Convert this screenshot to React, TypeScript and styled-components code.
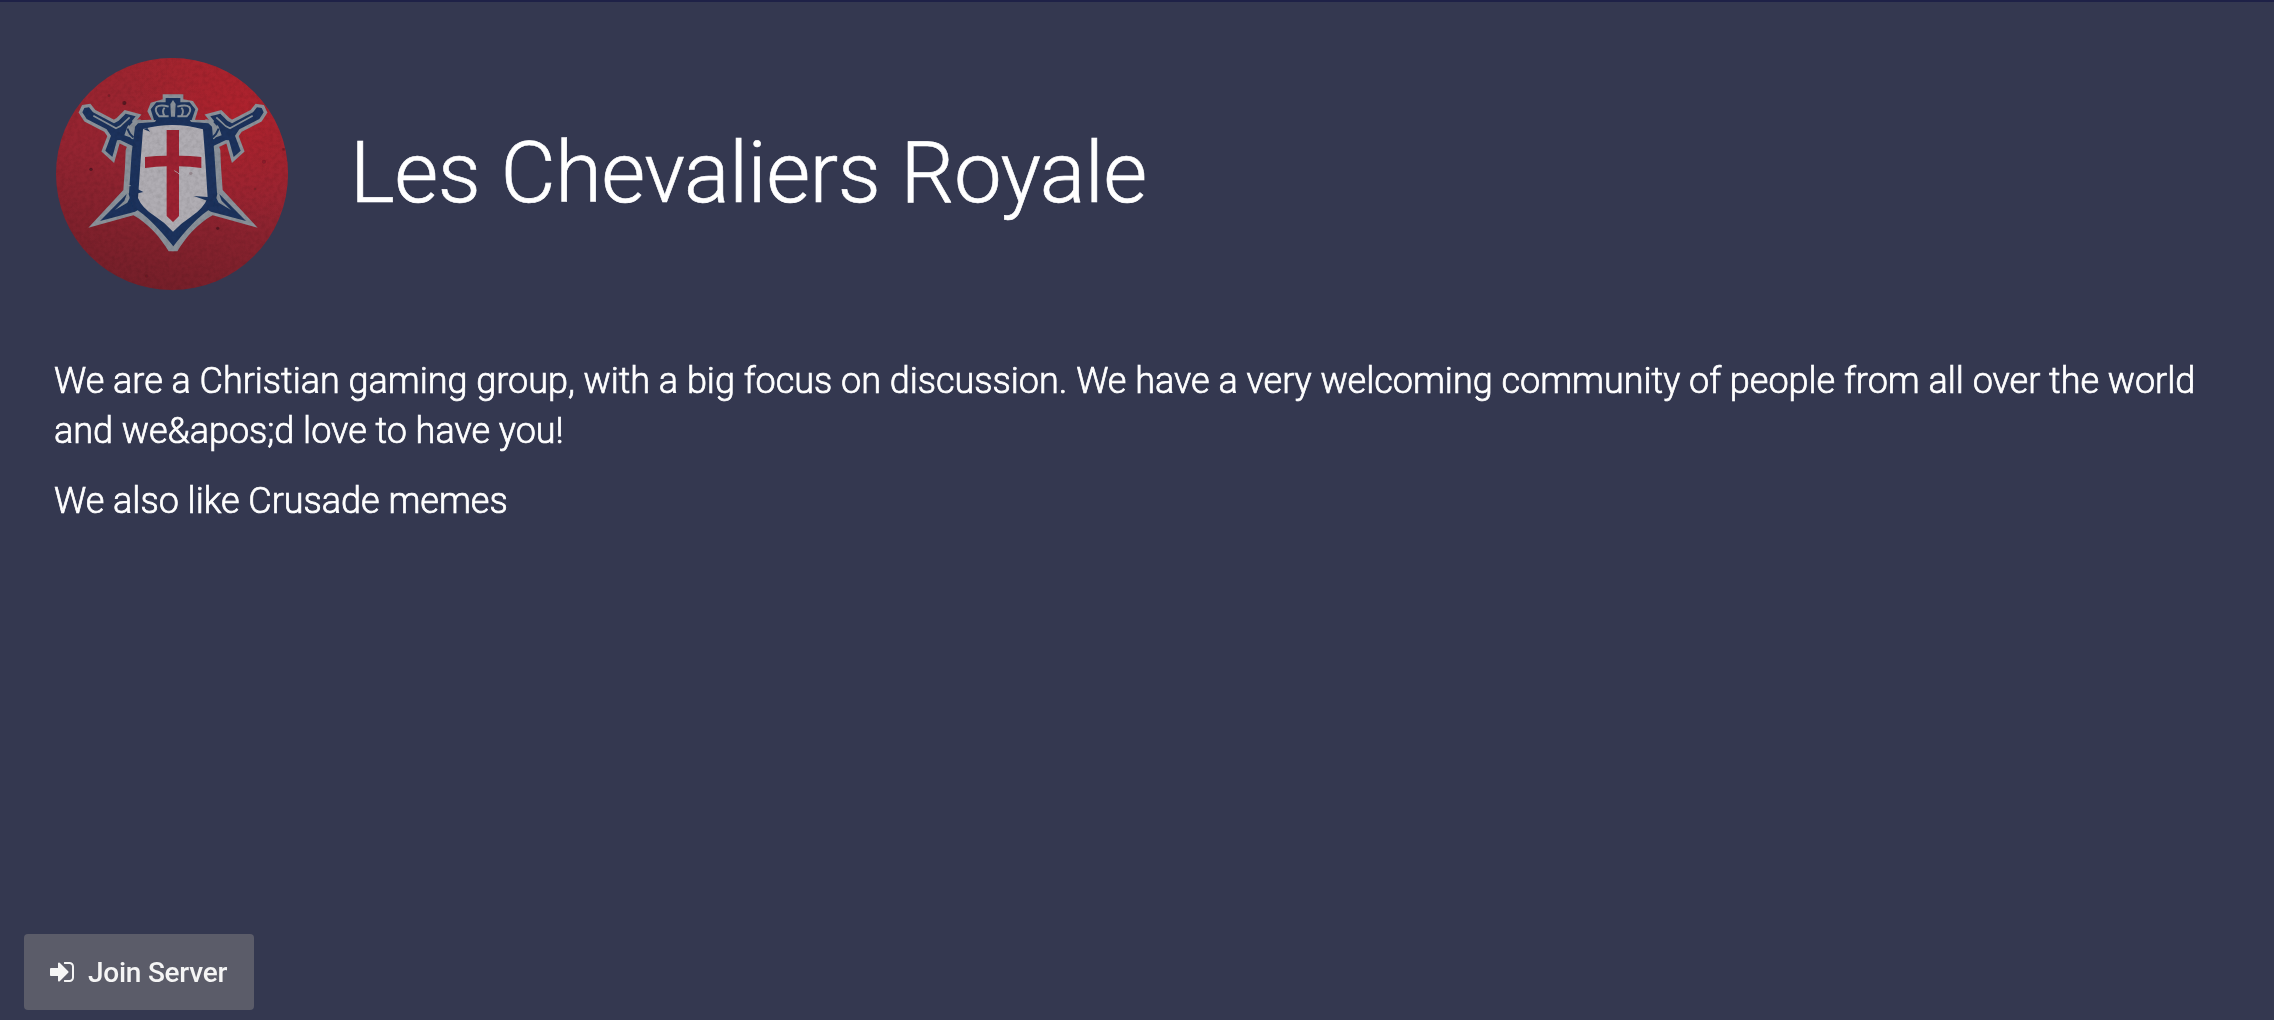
import React from "react";
import styled, { createGlobalStyle } from "styled-components";

const GlobalStyle = createGlobalStyle`
  *, *::before, *::after { box-sizing: border-box; }
  body { margin: 0; background: #343850; }
`;

const Page = styled.main`
  min-height: 1020px;
  display: flex;
  flex-direction: column;
  border-top: 2px solid #1e2147;
  background: #343850;
  color: #fff;
  font-family: Roboto, "Liberation Sans", sans-serif;
`;

const Header = styled.header`
  display: flex;
  align-items: center;
  gap: 62px;
  padding: 56px 56px 0;
`;

const Title = styled.h1`
  margin: 0 0 2px;
  font-size: 85px;
  font-weight: 300;
  line-height: 100px;
  letter-spacing: -0.52px;
  white-space: nowrap;
  -webkit-text-stroke: 0.6px currentColor;
`;

const Description = styled.section`
  flex: 1;
  padding: 66px 54px 0;
`;

const Paragraph = styled.p`
  margin: 0 0 20px;
  font-size: 36px;
  font-weight: 300;
  line-height: 50px;
  letter-spacing: -0.015px;
  -webkit-text-stroke: 0.7px currentColor;
`;

const Footer = styled.footer`
  display: flex;
  padding: 0 24px 10px;
`;

const JoinButton = styled.button`
  display: flex;
  align-items: center;
  gap: 14px;
  width: 230px;
  height: 76px;
  padding: 0 0 0 26px;
  border: 0;
  border-radius: 4px;
  background: #5b5c69;
  color: #f5f5f5;
  font: 500 28px Roboto, "Liberation Sans", sans-serif;
  letter-spacing: -0.25px;
  white-space: nowrap;
`;

const Emblem = styled.svg`
  display: block;
  flex: none;
  width: 232px;
  height: 232px;
  border-radius: 50%;
`;

const SignInIcon = () => (
  <svg width="24" height="20" viewBox="0 256 1536 1280" fill="currentColor" aria-hidden="true">
    <path d="M1184 896q0 26-19 45l-544 544q-19 19-45 19t-45-19-19-45v-288h-448q-26 0-45-19t-19-45v-384q0-26 19-45t45-19h448v-288q0-26 19-45t45-19 45 19l544 544q19 19 19 45zm352-352v704q0 119-84.5 203.5t-203.5 84.5h-320q-13 0-22.5-9.5t-9.5-22.5q0-4-1-20t-.5-26.5 3-23.5 10-19.5 20.5-6.5h320q66 0 113-47t47-113v-704q0-66-47-113t-113-47h-312l-11.5-1-11.5-3-8-5.5-7-9-2-13.5q0-4-1-20t-.5-26.5 3-23.5 10-19.5 20.5-6.5h320q119 0 203.5 84.5t84.5 203.5z" />
  </svg>
);

const NAVY = "#1a335c";
const STEEL = "#8a9199";
const HILT = "M127 217L133 204L147 202L159 217L222 250L236 242L257 221L287 229L262 260L253 286L286 298V322L240 300L231 301L217 351L196 332L213 287L200 268L140 237Z";

// One sword and one side of the shield rim; the other side is its mirror image.
const SwordSide = () => (
  <g>
    <path d="M268 300L257 330L255 380L250 450L145 563L280 526C325 550 362 594 386 634H400V280Z" fill={STEEL} />
    <path d={HILT} fill={STEEL} stroke={STEEL} strokeWidth="20" />
    <path d={HILT} fill={NAVY} />
    <path d="M284 240L302 238L294 300L275 297L264 282L262 268Z" fill={STEEL} />
    <path d="M262 266L270 282L280 292M266 255L276 244" fill="none" stroke={NAVY} strokeWidth="6" />
    <path d="M160 227L228 265L240 259L269 232" fill="none" stroke={STEEL} strokeWidth="5" />
    <path d="M180 543L258 464L275 455L310 500L285 515Z" fill={NAVY} />
  </g>
);

const BladeGroove = () => (
  <path d="M264 452L269 474L262 488L225 510L253 482Z" fill={STEEL} />
);

const KnightsEmblem = () => (
  <Emblem viewBox="48 54 696 696" role="img" aria-label="Les Chevaliers Royale">
    <defs>
      <linearGradient id="red" x1="0.65" y1="0" x2="0.4" y2="1">
        <stop offset="0" stopColor="#a0252f" />
        <stop offset="0.5" stopColor="#942431" />
        <stop offset="1" stopColor="#741f29" />
      </linearGradient>
      <radialGradient id="glow" cx="0.8" cy="0.22" r="0.5">
        <stop offset="0" stopColor="#b3212c" stopOpacity="0.75" />
        <stop offset="1" stopColor="#b3212c" stopOpacity="0" />
      </radialGradient>
      <filter id="soften"><feGaussianBlur stdDeviation="1.4" /></filter>
      <filter id="grain" x="0" y="0" width="1" height="1">
        <feTurbulence type="fractalNoise" baseFrequency="0.08" numOctaves="3" />
        <feColorMatrix values="0 0 0 0 0  0 0 0 0 0  0 0 0 0 0  0.8 0 0 0 -0.3" />
      </filter>
    </defs>
    <rect x="48" y="54" width="696" height="696" fill="url(#red)" />
    <rect x="48" y="54" width="696" height="696" fill="url(#glow)" />
    <g filter="url(#soften)">
      <SwordSide />
      <g transform="translate(798 0) scale(-1 1)"><SwordSide /></g>
      <path d="M368 163H430V178L459 183L475 207L465 239L510 241L522 253L519 280H278L280 251L292 241L335 239L322 214L332 188L368 178Z" fill={STEEL} />
      <path d="M377 174H421V187H449L466 208L455 240H342L332 208L349 187H377Z" fill={NAVY} />
      <path d="M399 180L407 192L405 230H393L391 192Z" fill={STEEL} />
      <path d="M386 200Q360 192 350 201Q342 213 358 229H386M412 200Q438 192 448 201Q456 213 440 229H412M374 203Q364 212 374 228M424 203Q434 212 424 228" fill="none" stroke={STEEL} strokeWidth="6" />
      <path d="M285 260L294 250L345 246L351 236H447L453 246L505 250L516 260L523 340L531 460L520 500C476 528 436 570 400 619C362 570 322 528 278 500L267 460L275 340Z" fill={NAVY} />
      <BladeGroove />
      <g transform="translate(798 0) scale(-1 1)"><BladeGroove /></g>
      <path d="M309 267Q399 243 489 268L495 345L503 474Q490 506 453 530Q425 548 399 575Q375 548 345 529Q305 503 294 474L303 345Z" fill="#b0adb3" />
      <path d="M380 270H417V347Q450 347 484 351V384Q450 379 417 379V528L399 546L380 528V379Q350 379 315 384V351Q350 347 380 347Z" fill="#9c2330" />
      <path d="M310 267L330 275L322 264ZM294 448L310 456L294 460ZM504 471L461 468L487 477L503 483Z" fill={NAVY} />
      <path d="M403 392L413 398L417 402" fill="none" stroke="#b0adb3" strokeWidth="2.5" />
      <path d="M264 437H272" stroke="#9ca2aa" strokeWidth="3" />
      <g fill="#47151f">
        <circle cx="253" cy="189" r="6" opacity="0.8" />
        <circle cx="153" cy="388" r="5" opacity="0.8" />
        <circle cx="533" cy="565" r="5" opacity="0.7" />
        <circle cx="672" cy="365" r="6" opacity="0.3" />
        <circle cx="207" cy="167" r="4" opacity="0.4" />
        <circle cx="645" cy="447" r="4" opacity="0.35" />
        <circle cx="320" cy="708" r="4" opacity="0.4" />
        <circle cx="731" cy="328" r="4" opacity="0.5" />
        <circle cx="452" cy="400" r="5" opacity="0.2" />
      </g>
    </g>
    <rect x="48" y="54" width="696" height="696" filter="url(#grain)" opacity="0.22" />
  </Emblem>
);

export default function App() {
  return (
    <>
      <GlobalStyle />
      <Page>
        <Header>
          <KnightsEmblem />
          <Title>Les Chevaliers Royale</Title>
        </Header>
        <Description>
          <Paragraph>
            We are a Christian gaming group, with a big focus on discussion. We have a very welcoming community of people from all over the world and we&amp;apos;d love to have you!
          </Paragraph>
          <Paragraph>We also like Crusade memes</Paragraph>
        </Description>
        <Footer>
          <JoinButton type="button">
            <SignInIcon />
            Join Server
          </JoinButton>
        </Footer>
      </Page>
    </>
  );
}
